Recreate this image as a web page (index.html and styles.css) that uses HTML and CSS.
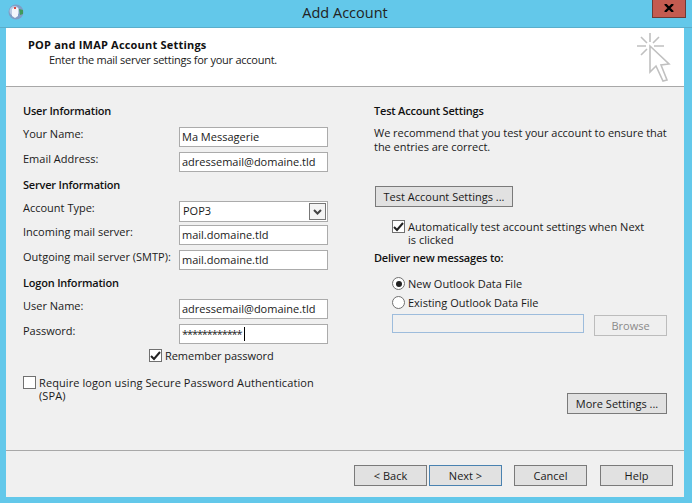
FILE: index.html
```html
<!DOCTYPE html>
<html lang="en">
<head>
  <meta charset="UTF-8">
  <title>Add Account</title>
  <link rel="stylesheet" href="styles.css">
</head>
<body>
  <div class="window">
    <div class="titlebar">
      <svg class="app-icon" width="16" height="16" viewBox="0 0 16 16">
        <circle cx="8" cy="8" r="7.5" fill="#7f9cc4"/>
        <circle cx="6.5" cy="7" r="5" fill="#b9c8e2"/>
        <path d="M4 5l3-2 3 1v8l-3 2-3-2z" fill="#f2f5fb"/>
        <path d="M11 5l4 1 0 4-3 1z" fill="#3f9a5a"/>
        <rect x="6" y="3" width="2" height="2" fill="#d8483e"/>
      </svg>
      <div class="title">Add Account</div>
      <div class="close">
        <svg width="10" height="8" viewBox="0 0 10 8" fill="none" stroke="#000" stroke-width="2.4"><path d="M1 0l8 8M9 0l-8 8"/></svg>
      </div>
    </div>

    <div class="client">
      <div class="header">
        <div class="header-text">
          <h1>POP and IMAP Account Settings</h1>
          <p>Enter the mail server settings for your account.</p>
        </div>
        <svg class="wizard-icon" width="36" height="52" viewBox="0 0 36 52" fill="none" stroke="#c0c0c0" stroke-width="1.6">
          <path d="M14 1v9M1 14h9M18 14h10M5 5l6 6M23 5l-6 6M5 23l6-6"/>
          <path d="M14 14v26l6-6 7 15 4-1-6-15 8-1z" fill="#fff"/>
        </svg>
      </div>

      <div class="main">
        <div class="col-left">
          <h2 class="first">User Information</h2>
          <div class="row"><label>Your Name:</label><div class="input">Ma Messagerie</div></div>
          <div class="row"><label>Email Address:</label><div class="input">adressemail@domaine.tld</div></div>

          <h2>Server Information</h2>
          <div class="row row-select"><label>Account Type:</label>
            <div class="input select">POP3
              <span class="select-btn">
                <svg width="9" height="6" viewBox="0 0 9 6" fill="none" stroke="#444" stroke-width="2"><path d="M1 1l3.5 3.5L8 1"/></svg>
              </span>
            </div>
          </div>
          <div class="row"><label>Incoming mail server:</label><div class="input">mail.domaine.tld</div></div>
          <div class="row"><label>Outgoing mail server (SMTP):</label><div class="input">mail.domaine.tld</div></div>

          <h2>Logon Information</h2>
          <div class="row"><label>User Name:</label><div class="input">adressemail@domaine.tld</div></div>
          <div class="row"><label>Password:</label><div class="input"><span class="secret">************</span><span class="caret"></span></div></div>

          <div class="check remember">
            <span class="box"><svg width="11" height="10" viewBox="0 0 11 10" fill="none" stroke="#222" stroke-width="2"><path d="M1 5l3 3 6-7"/></svg></span>
            <span>Remember password</span>
          </div>
          <div class="check spa">
            <span class="box"></span>
            <span>Require logon using Secure Password Authentication (SPA)</span>
          </div>
        </div>

        <div class="col-right">
          <h2 class="first">Test Account Settings</h2>
          <p class="intro">We recommend that you test your account to ensure that<br>the entries are correct.</p>
          <button class="btn test-btn">Test Account Settings ...</button>
          <div class="check auto">
            <span class="box"><svg width="11" height="10" viewBox="0 0 11 10" fill="none" stroke="#222" stroke-width="2"><path d="M1 5l3 3 6-7"/></svg></span>
            <span>Automatically test account settings when Next is clicked</span>
          </div>
          <h2 class="deliver">Deliver new messages to:</h2>
          <div class="radio first-radio"><span class="dot on"></span>New Outlook Data File</div>
          <div class="radio"><span class="dot"></span>Existing Outlook Data File</div>
          <div class="browse-row">
            <div class="path"></div>
            <button class="btn disabled">Browse</button>
          </div>
          <div class="more-row"><button class="btn more-btn">More Settings ...</button></div>
        </div>
      </div>

      <div class="footer">
        <button class="btn nav">&lt; Back</button>
        <button class="btn nav default">Next &gt;</button>
        <button class="btn nav cancel">Cancel</button>
        <button class="btn nav help">Help</button>
      </div>
    </div>
  </div>
</body>
</html>
```

FILE: styles.css
```css
/* Window */
body {
  margin: 0;
  width: 692px;
  height: 503px;
  overflow: hidden;
  background-color: #63c8ea;
  font-family: 'Open Sans', 'Noto Sans', sans-serif;
  font-size: 11px;
  color: #1a1a1a;
}

.window {
  height: 503px;
  display: flex;
  flex-direction: column;
}

.titlebar {
  height: 27px;
  flex: none;
  display: flex;
  padding: 0 6px 0 8px;
  border-bottom: 1px solid #5aaecb;
}

.app-icon {
  margin-top: 4px;
}

.title {
  flex: 1;
  text-align: center;
  font-size: 14.5px;
  line-height: 25px;
  padding-left: 14px;
  color: #222;
}

.close {
  width: 34px;
  height: 18px;
  background-color: #c45b50;
  border: 1px solid #6e3a35;
  border-top: 0;
  box-sizing: border-box;
  display: flex;
  justify-content: center;
  padding-top: 4px;
}

.client {
  width: 678px;
  height: 469px;
  margin-left: 6px;
  background-color: #f0f0f0;
  display: flex;
  flex-direction: column;
}

/* Header */
.header {
  height: 58px;
  flex: none;
  background-color: #fff;
  border-bottom: 1px solid #a8a8a8;
  display: flex;
  justify-content: space-between;
}

.header-text {
  padding: 9px 0 0 22px;
}

h1 {
  margin: 0;
  font-size: 11px;
  font-weight: 700;
  line-height: 15px;
  letter-spacing: 0.2px;
  color: #111;
}

.header-text p {
  margin: 0;
  padding-left: 21px;
  line-height: 15px;
  letter-spacing: -0.25px;
}

.wizard-icon {
  margin: 4px 12px 0 0;
}

/* Main columns */
.main {
  flex: 1;
  display: flex;
  padding: 0 17px 0 17px;
  border-bottom: 1px solid #a8a8a8;
}

.col-left {
  width: 305px;
}

.col-right {
  width: 293px;
  margin-left: 46px;
}

h2 {
  margin: 0;
  font-size: 11px;
  font-weight: 600;
  line-height: 15px;
  padding: 0 0 9px;
  letter-spacing: -0.2px;
  color: #111;
}

h2.first {
  padding-top: 16px;
}

.row {
  display: flex;
  height: 20px;
  margin-bottom: 5px;
}

.row label {
  width: 156px;
  line-height: 13px;
  flex: none;
}

.input {
  width: 149px;
  height: 20px;
  box-sizing: border-box;
  border: 1px solid #ababab;
  background-color: #fff;
  padding-left: 2px;
  line-height: 18px;
  white-space: nowrap;
  position: relative;
}

.row-select {
  height: 21px;
  margin-bottom: 3px;
}

.select {
  height: 21px;
  padding-left: 3px;
}

.select-btn {
  position: absolute;
  right: 1px;
  top: 1px;
  width: 15px;
  height: 15px;
  border: 1px solid #777;
  background-color: #f4f4f4;
  display: flex;
  align-items: center;
  justify-content: center;
}

.secret {
  letter-spacing: -1.1px;
}

.caret {
  display: inline-block;
  width: 1px;
  height: 14px;
  margin-left: 2px;
  vertical-align: -3px;
  background-color: #000;
}

/* Checkboxes and radios */
.check {
  display: flex;
  line-height: 13px;
}

.box {
  width: 11px;
  height: 11px;
  flex: none;
  margin-right: 3px;
  border: 1px solid #707070;
  background-color: #fff;
  display: flex;
  align-items: center;
  justify-content: center;
}

.remember {
  margin: 1px 0 0 126px;
  letter-spacing: -0.05px;
}

.spa {
  margin-top: 14px;
  letter-spacing: 0.09px;
}

.auto {
  margin: 13px 0 0 18px;
  width: 260px;
}

.intro {
  margin: -1px 0 0;
  line-height: 14px;
  white-space: nowrap;
  letter-spacing: -0.03px;
}

h2.deliver {
  padding: 4px 0 0;
}

.radio {
  display: flex;
  align-items: center;
  height: 19px;
  margin-left: 18px;
}

.first-radio {
  margin-top: 9px;
}

.dot {
  width: 11px;
  height: 11px;
  margin-right: 3px;
  border: 1px solid #707070;
  border-radius: 50%;
  background-color: #fff;
  position: relative;
}

.dot.on::after {
  content: '';
  position: absolute;
  left: 2.5px;
  top: 2.5px;
  width: 6px;
  height: 6px;
  border-radius: 50%;
  background-color: #222;
}

/* Buttons */
.btn {
  height: 21px;
  padding: 0;
  box-sizing: border-box;
  font-family: inherit;
  font-size: 11px;
  color: #1a1a1a;
  background-color: #e1e1e1;
  border: 1px solid #7a7a7a;
}

.test-btn {
  display: block;
  width: 138px;
  margin: 32px 0 0 1px;
}

.browse-row {
  display: flex;
  align-items: flex-start;
  margin: 2px 0 0 18px;
}

.path {
  width: 190px;
  height: 17px;
  border: 1px solid #9dbcdc;
}

.disabled {
  width: 73px;
  margin: 1px 0 0 10px;
  background-color: #efefef;
  border-color: #bcbcbc;
  color: #8a8a8a;
}

.more-row {
  display: flex;
  justify-content: flex-end;
  margin-top: 57px;
}

.more-btn {
  width: 100px;
}

/* Footer */
.footer {
  height: 46px;
  flex: none;
  display: flex;
  align-items: flex-start;
  padding: 14px 0 0 348px;
  box-sizing: border-box;
}

.nav {
  width: 73px;
}

.default {
  margin-left: 2px;
  border-color: #4a82b0;
}

.cancel {
  margin-left: 12px;
}

.help {
  margin-left: 13px;
}
```
